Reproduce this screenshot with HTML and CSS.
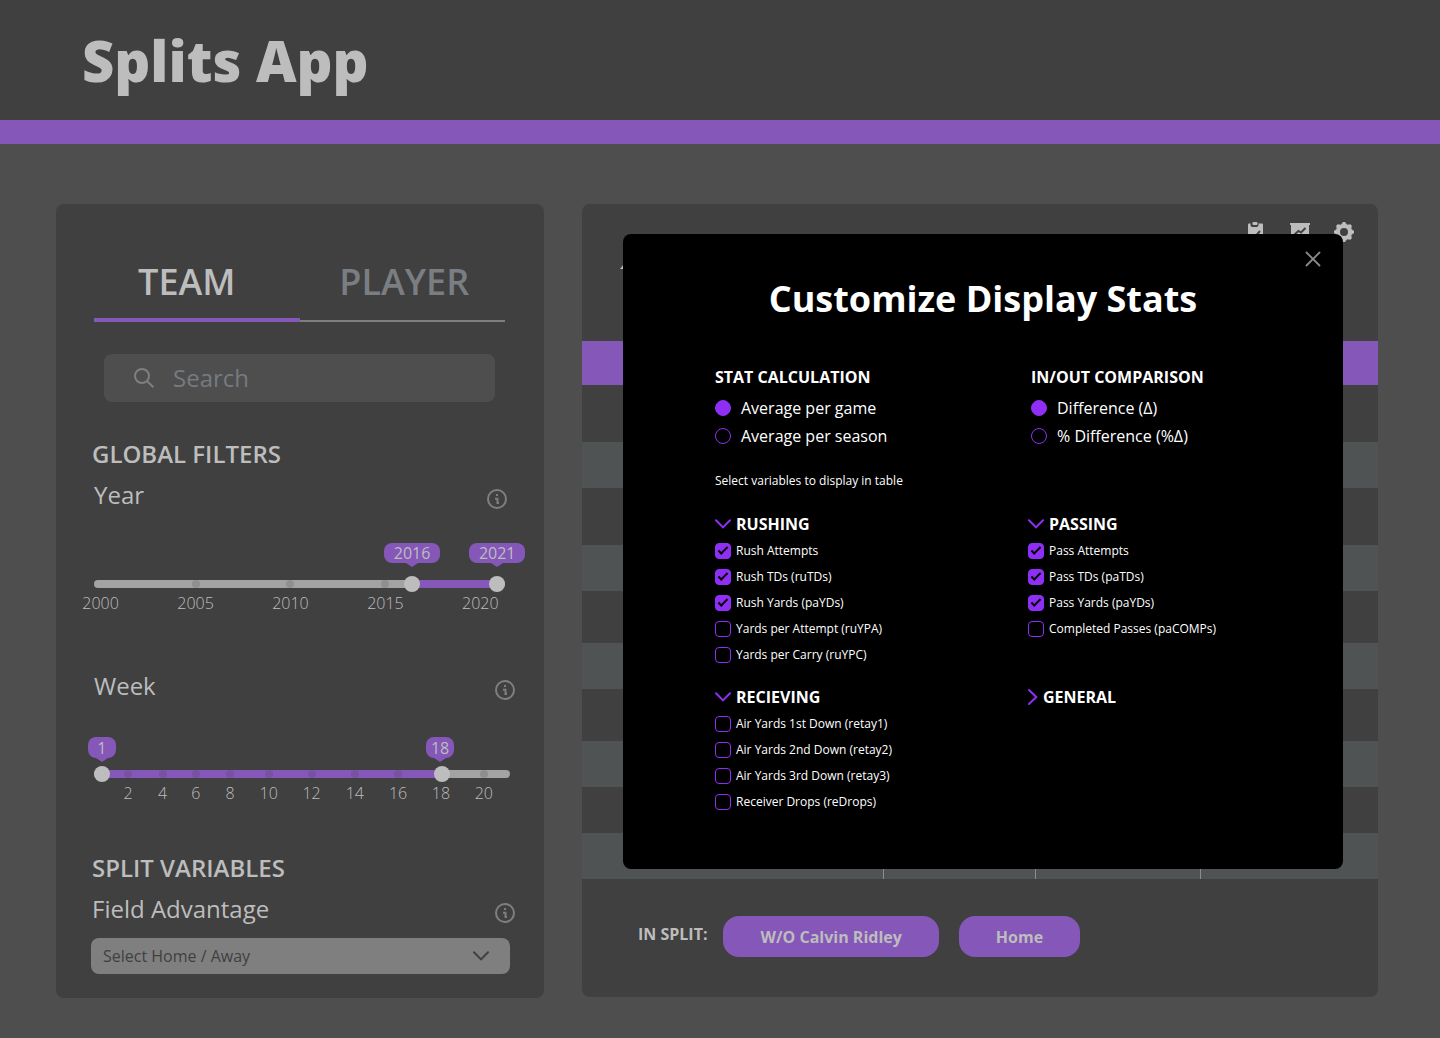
FILE: index.html
```html
<!DOCTYPE html>
<html lang="en">
<head>
<meta charset="utf-8">
<meta name="viewport" content="width=device-width, initial-scale=1">
<title>Splits App</title>
<link rel="stylesheet" href="styles.css">
</head>
<body>
<svg class="sprite" aria-hidden="true">
  <symbol id="info" viewBox="0 0 20 20">
    <circle cx="10" cy="10" r="9" fill="none" stroke="currentColor" stroke-width="2"/>
    <rect x="9" y="5" width="2" height="2" fill="currentColor"/>
    <path d="M8 9.800h2.500v4.200h1.500" fill="none" stroke="currentColor" stroke-width="2"/>
  </symbol>
  <symbol id="chevron" viewBox="0 0 16 10">
    <path d="M1 1.200 8 8.400 15 1.200" fill="none" stroke="currentColor" stroke-width="2" stroke-linecap="round"/>
  </symbol>
</svg>

<header class="topbar"><h1 class="brand">Splits App</h1></header>

<main class="layout">
  <section class="panel filters">
    <div class="tabs" role="tablist">
      <button class="tab tab-active" role="tab" aria-selected="true">TEAM</button>
      <button class="tab tab-idle" role="tab" aria-selected="false">PLAYER</button>
    </div>

    <label class="search">
      <svg class="search-icon" viewBox="0 0 20 20" aria-hidden="true"><circle cx="8" cy="8" r="7" fill="none" stroke="currentColor" stroke-width="2"/><path d="m13 13 6.300 6.300" stroke="currentColor" stroke-width="2"/></svg>
      <input class="search-input" type="search" placeholder="Search" aria-label="Search">
    </label>

    <h2 class="group-title">GLOBAL FILTERS</h2>

    <div class="filter filter-year">
      <div class="filter-head"><span class="filter-name">Year</span><button class="info" aria-label="About year"><svg><use href="#info"/></svg></button></div>
      <div class="slider">
        <div class="track"><div class="fill" style="left:77.4%;right:1.9%"></div></div>
        <ol class="ticks">
          <li style="left:1.6%">2000</li>
          <li class="dot" style="left:24.7%">2005</li>
          <li class="dot" style="left:47.8%">2010</li>
          <li class="dot" style="left:70.9%">2015</li>
          <li style="left:94%">2020</li>
        </ol>
        <input class="range" type="range" min="2000" max="2021" step="any" value="2016.5" aria-label="First year">
        <input class="range" type="range" min="2000" max="2021" step="any" value="2021" aria-label="Last year">
        <output class="bubble" style="left:77.4%">2016</output>
        <output class="bubble" style="left:98.1%">2021</output>
      </div>
    </div>

    <div class="filter filter-week">
      <div class="filter-head"><span class="filter-name">Week</span><button class="info" aria-label="About week"><svg><use href="#info"/></svg></button></div>
      <div class="slider">
        <div class="track"><div class="fill" style="left:1.9%;right:16.8%"></div></div>
        <ol class="ticks">
          <li class="dot" style="left:8.2%">2</li>
          <li class="dot" style="left:16.5%">4</li>
          <li class="dot" style="left:24.5%">6</li>
          <li class="dot" style="left:32.7%">8</li>
          <li class="dot" style="left:42%">10</li>
          <li class="dot" style="left:52.3%">12</li>
          <li class="dot" style="left:62.7%">14</li>
          <li class="dot" style="left:73.1%">16</li>
          <li style="left:83.4%">18</li>
          <li class="dot" style="left:93.7%">20</li>
        </ol>
        <input class="range" type="range" min="1" max="21" value="1" aria-label="First week">
        <input class="range" type="range" min="1" max="21" value="18" aria-label="Last week">
        <output class="bubble" style="left:1.9%">1</output>
        <output class="bubble" style="left:83.2%">18</output>
      </div>
    </div>

    <h2 class="group-title">SPLIT VARIABLES</h2>
    <div class="filter-head field-head"><label class="filter-name" for="field">Field Advantage</label><button class="info" aria-label="About field advantage"><svg><use href="#info"/></svg></button></div>
    <div class="select-wrap">
      <select class="select" id="field"><option>Select Home / Away</option></select>
      <svg class="select-arrow" aria-hidden="true"><use href="#chevron"/></svg>
    </div>
  </section>

  <section class="panel results">
    <div class="results-head">
      <svg class="marker" viewBox="0 0 28 36" aria-hidden="true"><path d="M0 36 14 18 28 36z" fill="currentColor"/></svg>
      <div class="tools">
        <button class="tool" aria-label="Clipboard"><svg viewBox="0 0 20 20"><path d="M3 1.500h1.500v1.500a2 2 0 0 0 2 2h4a2 2 0 0 0 2-2V1.500H16a1 1 0 0 1 1 1V18a1 1 0 0 1-1 1H3a1 1 0 0 1-1-1V2.500a1 1 0 0 1 1-1z" fill="currentColor"/><rect x="6.500" y="0" width="5" height="3" rx="1" fill="currentColor"/><path d="m6 13 2.500 2.500L14 9" fill="none" stroke="#404040" stroke-width="2"/></svg></button>
        <button class="tool" aria-label="Chart"><svg viewBox="0 0 20 20"><path d="M0 1h20v2h-1v12H1V3H0zM9 15h2v4H9z" fill="currentColor"/><path d="m4.500 12.500 4-3.500 2.500 1.500L15.500 6" fill="none" stroke="#404040" stroke-width="2"/></svg></button>
        <button class="tool" aria-label="Settings"><svg viewBox="0 0 20 20"><g fill="currentColor"><circle cx="10" cy="10" r="7.600"/><path id="tooth" d="M6 4 9 0h2L14 4v12l-3 4H9L6 16z"/><use href="#tooth" transform="rotate(45 10 10)"/><use href="#tooth" transform="rotate(90 10 10)"/><use href="#tooth" transform="rotate(135 10 10)"/></g><circle cx="10" cy="10" r="4" fill="#404040"/></svg></button>
      </div>
    </div>
    <table class="stats">
      <colgroup><col class="col-name"><col class="col-a"><col class="col-b"><col></colgroup>
      <thead><tr><td></td><td></td><td></td><td></td></tr></thead>
      <tbody>
        <tr class="tall"><td></td><td></td><td></td><td></td></tr>
        <tr><td></td><td></td><td></td><td></td></tr>
        <tr class="tall"><td></td><td></td><td></td><td></td></tr>
        <tr><td></td><td></td><td></td><td></td></tr>
        <tr class="mid"><td></td><td></td><td></td><td></td></tr>
        <tr><td></td><td></td><td></td><td></td></tr>
        <tr class="mid"><td></td><td></td><td></td><td></td></tr>
        <tr><td></td><td></td><td></td><td></td></tr>
        <tr><td></td><td></td><td></td><td></td></tr>
        <tr><td></td><td></td><td></td><td></td></tr>
      </tbody>
    </table>
    <div class="splits">
      <span class="splits-label">IN SPLIT:</span>
      <div class="pills"><button class="pill">W/O Calvin Ridley</button><button class="pill">Home</button></div>
    </div>

    <div class="modal" role="dialog" aria-labelledby="modal-title">
      <button class="close" aria-label="Close"><svg viewBox="0 0 16 16"><path d="m1.500 1.500 13 13m0-13-13 13" stroke="currentColor" stroke-width="1.800" stroke-linecap="round"/></svg></button>
      <h2 class="modal-title" id="modal-title">Customize Display Stats</h2>
      <div class="modes">
        <fieldset class="mode">
          <legend>STAT CALCULATION</legend>
          <label class="option"><input type="radio" name="calc" checked>Average per game</label>
          <label class="option"><input type="radio" name="calc">Average per season</label>
        </fieldset>
        <fieldset class="mode">
          <legend>IN/OUT COMPARISON</legend>
          <label class="option"><input type="radio" name="comp" checked>Difference (Δ)</label>
          <label class="option"><input type="radio" name="comp">% Difference (%Δ)</label>
        </fieldset>
      </div>
      <p class="hint">Select variables to display in table</p>
      <div class="variables">
        <section>
          <h3><button class="toggle" aria-expanded="true"><svg class="caret"><use href="#chevron"/></svg>RUSHING</button></h3>
          <label class="check"><input type="checkbox" checked>Rush Attempts</label>
          <label class="check"><input type="checkbox" checked>Rush TDs (ruTDs)</label>
          <label class="check"><input type="checkbox" checked>Rush Yards (paYDs)</label>
          <label class="check"><input type="checkbox">Yards per Attempt (ruYPA)</label>
          <label class="check"><input type="checkbox">Yards per Carry (ruYPC)</label>
        </section>
        <section>
          <h3><button class="toggle" aria-expanded="true"><svg class="caret"><use href="#chevron"/></svg>PASSING</button></h3>
          <label class="check"><input type="checkbox" checked>Pass Attempts</label>
          <label class="check"><input type="checkbox" checked>Pass TDs (paTDs)</label>
          <label class="check"><input type="checkbox" checked>Pass Yards (paYDs)</label>
          <label class="check"><input type="checkbox">Completed Passes (paCOMPs)</label>
        </section>
        <section>
          <h3><button class="toggle" aria-expanded="true"><svg class="caret"><use href="#chevron"/></svg>RECIEVING</button></h3>
          <label class="check"><input type="checkbox">Air Yards 1st Down (retay1)</label>
          <label class="check"><input type="checkbox">Air Yards 2nd Down (retay2)</label>
          <label class="check"><input type="checkbox">Air Yards 3rd Down (retay3)</label>
          <label class="check"><input type="checkbox">Receiver Drops (reDrops)</label>
        </section>
        <section>
          <h3><button class="toggle" aria-expanded="false"><svg class="caret-closed" viewBox="0 0 10 16"><path d="M1 1 8.300 8 1 15" fill="none" stroke="currentColor" stroke-width="2" stroke-linecap="round"/></svg>GENERAL</button></h3>
        </section>
      </div>
    </div>
  </section>
</main>
</body>
</html>
```
FILE: styles.css
```css
:root {
  --surface: #404040;
  --page: #4e4e4e;
  --text: #bdbdbd;
  --muted: #7f7f7f;
  --purple: #8457b8;
  --accent: #8f2ff5;
}
* { box-sizing: border-box; }
body {
  margin: 0;
  background: var(--page);
  color: var(--text);
  font: 16px/22px "Open Sans", "Noto Sans", sans-serif;
}
h1, h2, h3, p, ol, fieldset { margin: 0; padding: 0; border: 0; }
button, input, select { font: inherit; color: inherit; }
button { margin: 0; padding: 0; border: 0; background: none; cursor: pointer; }
svg { display: block; }
.sprite { position: absolute; width: 0; height: 0; }

.topbar {
  padding: 22px 82px;
  background: var(--surface);
  border-bottom: 24px solid var(--purple);
}
.brand { font-size: 56px; line-height: 76px; font-weight: 800; }

.layout {
  display: grid;
  grid-template-columns: minmax(0, 488fr) minmax(0, 796fr);
  gap: 38px;
  padding: 60px 62px 40px 56px;
}
.panel { background: var(--surface); border-radius: 8px; }

/* Filters */
.filters { padding: 54px 29px 24px 35px; }
.tabs {
  display: grid;
  grid-template-columns: 1fr 1fr;
  margin: 0 10px 0 3px;
  box-shadow: inset 0 -2px var(--muted);
}
.tab {
  padding-bottom: 12px;
  border-bottom: 4px solid transparent;
  color: #7a7e82;
  font-size: 36px;
  line-height: 48px;
  font-weight: 600;
}
.tab-active { padding-right: 20px; border-color: var(--purple); color: var(--text); }
.tab-idle { padding-left: 4px; }

.search {
  display: flex;
  align-items: center;
  gap: 19px;
  height: 48px;
  margin: 32px 20px 36px 13px;
  padding: 0 30px;
  border-radius: 8px;
  background: var(--page);
  color: var(--muted);
}
.search-icon { width: 20px; height: 20px; flex: none; }
.search-input {
  flex: 1;
  min-width: 0;
  padding: 0;
  border: 0;
  outline: 0;
  background: none;
  appearance: none;
  font-size: 24px;
  line-height: 32px;
}
.search-input::placeholder { color: #757b80; opacity: 1; }

.group-title { padding-left: 1px; font-size: 24px; line-height: 32px; font-weight: 600; }
.filter { padding-left: 3px; }
.filter-head { display: flex; justify-content: space-between; align-items: center; }
.filter-name { font-size: 24px; line-height: 32px; }
.info { padding-top: 8px; color: var(--muted); }
.info svg { width: 20px; height: 20px; }
.filter-year { padding-right: 8px; margin: 9px 0 78px; }
.filter-week { margin-bottom: 70px; }
.field-head { margin: 9px 0 13px; padding-left: 1px; }

.slider { position: relative; height: 16px; padding: 4px 0; margin-top: 65px; }
.filter-year .slider { margin-right: 2px; }
.filter-week .slider { margin-top: 64px; margin-right: 5px; }
.track { position: relative; height: 8px; border-radius: 4px; background: #a3a3a3; }
.fill { position: absolute; top: 0; bottom: 0; background: var(--purple); }
.ticks { list-style: none; }
.ticks li {
  position: absolute;
  top: 100%;
  width: 40px;
  margin-left: -20px;
  text-align: center;
  font-weight: 300;
}
.dot::before {
  content: "";
  position: absolute;
  top: -12px;
  left: 16px;
  width: 8px;
  height: 8px;
  border-radius: 50%;
  background: rgba(64, 64, 64, .2);
}
.range {
  position: absolute;
  inset: 0;
  width: 100%;
  height: 16px;
  margin: 0;
  appearance: none;
  background: none;
  pointer-events: none;
}
.range::-webkit-slider-thumb {
  appearance: none;
  width: 16px;
  height: 16px;
  border-radius: 50%;
  background: var(--text);
  pointer-events: auto;
}
.bubble {
  position: absolute;
  bottom: 29px;
  width: 56px;
  height: 20px;
  margin-left: -28px;
  border-radius: 8px;
  background: var(--purple);
  line-height: 20px;
  text-align: center;
}
.bubble::after {
  content: "";
  position: absolute;
  top: 100%;
  left: 50%;
  margin-left: -6px;
  border: 6px solid transparent;
  border-top: 4px solid var(--purple);
  border-bottom: 0;
}
.filter-week .bubble {
  bottom: 24px;
  width: 28px;
  height: 21px;
  margin-left: -14px;
  line-height: 22px;
}

.select-wrap { position: relative; margin-right: 5px; }
.select {
  display: block;
  width: 100%;
  height: 36px;
  padding: 0 40px 0 12px;
  border: 0;
  border-radius: 8px;
  appearance: none;
  background: var(--muted);
  color: var(--surface);
}
.select-arrow {
  position: absolute;
  top: 13px;
  right: 21px;
  width: 16px;
  height: 10px;
  color: var(--surface);
  pointer-events: none;
}

/* Results */
.results { position: relative; align-self: start; }
.results-head {
  display: flex;
  justify-content: space-between;
  align-items: flex-start;
  height: 137px;
  padding: 18px 24px 0 38px;
}
.marker { width: 28px; height: 36px; margin-top: 11px; }
.tools { display: flex; gap: 24px; }
.tool svg { width: 20px; height: 20px; }

.stats { width: 100%; table-layout: fixed; border-collapse: collapse; }
.col-name { width: 301px; }
.col-a { width: 152px; }
.col-b { width: 165px; }
.stats thead { background: var(--purple); }
.stats thead tr { height: 44px; }
.stats tbody tr { height: 46px; }
.stats tbody .tall { height: 57px; }
.stats tbody .mid { height: 52px; }
.stats tbody tr:nth-child(even) { background: #4f5354; }
.stats td { padding: 0; }
.stats tbody td + td { border-left: 1px solid #8a8d8e; }

.splits { display: flex; gap: 16px; padding: 37px 56px 40px; }
.splits-label { line-height: 36px; font-weight: 700; }
.pills { display: flex; gap: 20px; }
.pill {
  height: 41px;
  padding: 0 37px;
  border-radius: 16px;
  background: var(--purple);
  font-weight: 700;
}

/* Customize dialog */
.modal {
  position: absolute;
  top: 30px;
  left: 41px;
  right: 35px;
  padding: 41px 0 54px 92px;
  border-radius: 8px;
  background: #000;
  color: #fff;
}
.close { position: absolute; top: 17px; right: 22px; color: #8a8a8a; }
.close svg { width: 16px; height: 16px; }
.modal-title {
  margin: 0 0 43px -92px;
  font-size: 36px;
  line-height: 48px;
  font-weight: 700;
  text-align: center;
}
.modes { display: grid; grid-template-columns: 316fr 312fr; }
.mode { min-width: 0; }
.mode legend { padding: 0 0 6px; font-weight: 700; }
.option { display: flex; align-items: center; gap: 10px; height: 28px; }
.option input, .check input {
  appearance: none;
  flex: none;
  width: 16px;
  height: 16px;
  margin: 0;
  border: 1px solid var(--accent);
  border-radius: 50%;
}
.option input:checked, .check input:checked { background: var(--accent); }
.hint { margin: 23px 0 24px; font-size: 12px; line-height: 16px; }
.variables { display: grid; grid-template-columns: 313fr 315fr; row-gap: 18px; }
.toggle {
  display: flex;
  align-items: center;
  gap: 5px;
  margin-bottom: 3px;
  font-size: 16px;
  line-height: 22px;
  font-weight: 700;
}
.caret { width: 16px; height: 10px; color: var(--accent); }
.caret-closed { width: 10px; height: 16px; color: var(--accent); }
.check {
  display: flex;
  align-items: center;
  gap: 5px;
  height: 26px;
  font-size: 12px;
  line-height: 16px;
}
.check input { position: relative; border-radius: 4px; }
.check input:checked::after {
  content: "";
  position: absolute;
  box-sizing: border-box;
  top: 3px;
  left: 2px;
  width: 10px;
  height: 5px;
  border: solid #000;
  border-width: 0 0 2px 2px;
  transform: rotate(-45deg);
}
```
